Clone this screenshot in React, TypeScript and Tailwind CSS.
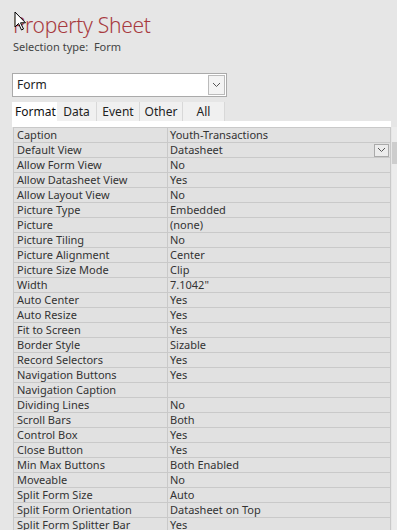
import React from 'react';

const rows: [string, string][] = [
  ['Caption', 'Youth-Transactions'],
  ['Default View', 'Datasheet'],
  ['Allow Form View', 'No'],
  ['Allow Datasheet View', 'Yes'],
  ['Allow Layout View', 'No'],
  ['Picture Type', 'Embedded'],
  ['Picture', '(none)'],
  ['Picture Tiling', 'No'],
  ['Picture Alignment', 'Center'],
  ['Picture Size Mode', 'Clip'],
  ['Width', '7.1042"'],
  ['Auto Center', 'Yes'],
  ['Auto Resize', 'Yes'],
  ['Fit to Screen', 'Yes'],
  ['Border Style', 'Sizable'],
  ['Record Selectors', 'Yes'],
  ['Navigation Buttons', 'Yes'],
  ['Navigation Caption', ''],
  ['Dividing Lines', 'No'],
  ['Scroll Bars', 'Both'],
  ['Control Box', 'Yes'],
  ['Close Button', 'Yes'],
  ['Min Max Buttons', 'Both Enabled'],
  ['Moveable', 'No'],
  ['Split Form Size', 'Auto'],
  ['Split Form Orientation', 'Datasheet on Top'],
  ['Split Form Splitter Bar', 'Yes'],
];

const tabs = ['Format', 'Data', 'Event', 'Other', 'All'];

function Chevron() {
  return (
    <svg width="9" height="6" viewBox="0 0 9 6">
      <path d="M1 1 L4.5 4.5 L8 1" fill="none" stroke="#555" strokeWidth="1" />
    </svg>
  );
}

function Cursor() {
  return (
    <svg className="absolute left-[14px] top-[11px]" width="14" height="21" viewBox="0 0 14 21">
      <path
        d="M1 1 L1 16 L4.5 12.5 L7.5 19 L9.5 18 L6.5 11.8 L11.5 11.8 Z"
        fill="#fff"
        stroke="#000"
        strokeWidth="1"
        strokeLinejoin="miter"
      />
    </svg>
  );
}

export default function App() {
  return (
    <div
      className="relative w-[397px] h-[530px] overflow-hidden bg-[#e6e6e6] text-[#333]"
      style={{ fontFamily: '"Noto Sans", "Open Sans", sans-serif' }}
    >
      <div className="px-[13px] pt-[11px]">
        <div className="text-[21px] leading-[28px] text-[#a83a40] font-light tracking-[-0.3px]">Property Sheet</div>
        <div className="text-[11px] leading-[14px] mt-[1px] text-[#444]">
          Selection type:&nbsp;&nbsp;Form
        </div>
      </div>

      <div className="ml-[12px] mt-[19px] w-[215px] h-[24px] bg-white border border-[#aaa] flex items-center">
        <span className="flex-1 pl-[4px] text-[12px] text-[#222]">Form</span>
        <div className="w-[17px] h-[20px] mr-[1px] border border-[#bbb] bg-[#f3f3f3] flex items-center justify-center">
          <Chevron />
        </div>
      </div>

      <div className="ml-[12px] mt-[5px] flex h-[19px] text-[12px] leading-[19px]">
        {tabs.map((t, i) => (
          <div
            key={t}
            className={
              i === 0
                ? 'w-[45px] h-[25px] bg-white text-[#111] pl-[3px]'
                : 'h-[19px] bg-[#f0f0f0] border-r border-[#d8d8d8] text-center text-[#222] ' +
                  (i === 1 ? 'w-[40px]' : i === 2 ? 'w-[43px]' : i === 3 ? 'w-[43px]' : 'w-[42px]')
            }
          >
            {t}
          </div>
        ))}
      </div>

      <div className="ml-[57px] w-[334px] h-[6px] bg-white" />

      <div className="flex">
        <div className="ml-[13px] w-[379px] border-l border-t border-[#c9c9c9]">
          {rows.map(([k, v], i) => (
            <div key={k} className="flex h-[15px] text-[11px] leading-[14px]">
              <div className="w-[154px] bg-[#e1e1e1] border-r border-b border-[#c9c9c9] pl-[3px] whitespace-nowrap overflow-hidden">
                {k}
              </div>
              <div className="flex-1 bg-[#e1e1e1] border-r border-b border-[#c9c9c9] pl-[2px] flex items-center justify-between whitespace-nowrap">
                <span className="leading-[14px]">{v}</span>
                {i === 1 && (
                  <div className="w-[15px] h-[13px] mr-[1px] border border-[#aaa] bg-[#ececec] flex items-center justify-center">
                    <Chevron />
                  </div>
                )}
              </div>
            </div>
          ))}
        </div>
        <div className="w-[5px] ml-[1px] bg-[#ececec] flex flex-col">
          <div className="h-[15px]" />
          <div className="h-[22px] bg-[#cdcdcd]" />
        </div>
      </div>

      <Cursor />
    </div>
  );
}
